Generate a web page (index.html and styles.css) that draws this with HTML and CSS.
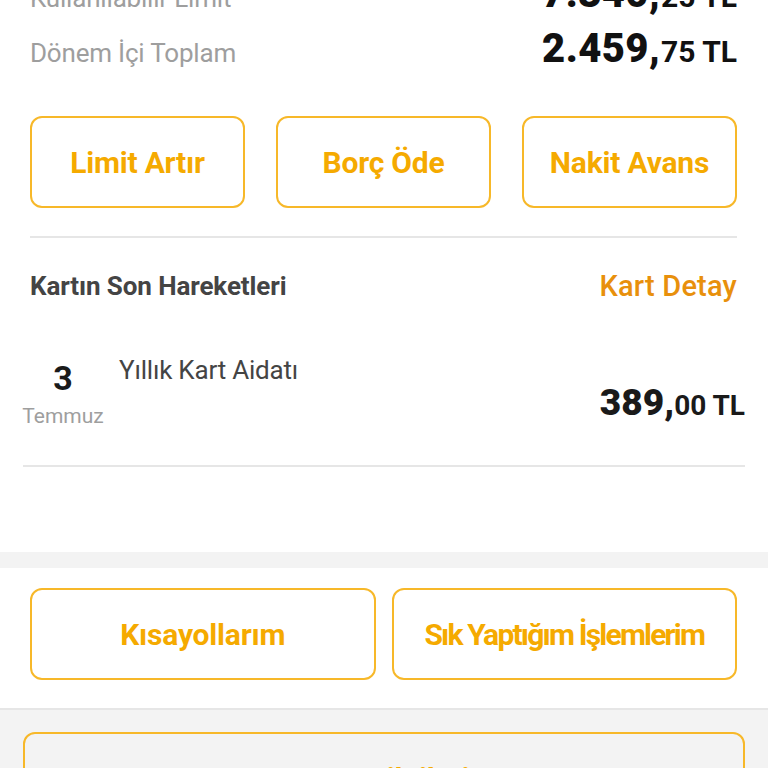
FILE: index.html
```html
<!DOCTYPE html>
<html lang="tr">
  <head>
    <meta charset="UTF-8" />
    <title>Kart Özeti</title>
    <link rel="stylesheet" href="styles.css">
  </head>
  <body>
    <section class="card-section">
      <div class="summary">
        <div class="summary-row">
          <span class="label">Kullanılabilir Limit</span>
          <span class="amount"><b>7.340,</b><small>25 TL</small></span>
        </div>
        <div class="summary-row">
          <span class="label">Dönem İçi Toplam</span>
          <span class="amount"><b>2.459,</b><small>75 TL</small></span>
        </div>
      </div>

      <div class="actions three">
        <button class="outline">Limit Artır</button>
        <button class="outline">Borç Öde</button>
        <button class="outline">Nakit Avans</button>
      </div>

      <div class="moves-head">
        <span class="title">Kartın Son Hareketleri</span>
        <a class="link">Kart Detay</a>
      </div>

      <div class="move">
        <div class="date">
          <span class="day">3</span>
          <span class="month">Temmuz</span>
        </div>
        <div class="desc">Yıllık Kart Aidatı</div>
        <div class="move-amount"><b>389,</b><small>00 TL</small></div>
      </div>
    </section>

    <section class="shortcuts">
      <div class="actions two">
        <button class="outline">Kısayollarım</button>
        <button class="outline tight">Sık Yaptığım İşlemlerim</button>
      </div>
    </section>

    <section class="more">
      <button class="outline wide">Borç Bilgileri</button>
    </section>
  </body>
</html>
```

FILE: styles.css
```css
body {
  margin: 0;
  font-family: Roboto, "Noto Sans", sans-serif;
  background: #f3f3f3;
  overflow: hidden;
}

.card-section {
  background: white;
  margin-top: -34px;
  padding: 0 31px 0 30px;
  height: 586px;
}

/* Summary */
.summary-row {
  display: flex;
  justify-content: space-between;
  align-items: baseline;
  height: 55px;
  line-height: 55px;
}
.label {
  color: #9e9e9e;
  font-size: 26px;
  letter-spacing: -0.2px;
}
.amount {
  color: #111;
  font-weight: bold;
}
.amount b {
  font-size: 40px;
  letter-spacing: 0.4px;
}
.amount small {
  font-size: 30px;
  margin-left: 1px;
}

/* Buttons */
.actions {
  display: grid;
  gap: 31px;
}
.actions.three {
  grid-template-columns: repeat(3, 1fr);
  margin-top: 40px;
  padding-bottom: 28px;
  border-bottom: 2px solid #e6e6e6;
}
.actions.two {
  grid-template-columns: 1fr 1fr;
  gap: 16px;
}
.outline {
  height: 92px;
  background: white;
  border: 2px solid #f7b829;
  border-radius: 12px;
  color: #f5aa00;
  font-family: Roboto, sans-serif;
  font-size: 30px;
  font-weight: bold;
  letter-spacing: -0.2px;
  padding: 0;
}
.outline.tight {
  letter-spacing: -1.8px;
}

/* Moves */
.moves-head {
  display: flex;
  justify-content: space-between;
  align-items: center;
  height: 96px;
}
.moves-head .title {
  color: #444;
  font-size: 26px;
  font-weight: bold;
  letter-spacing: -0.1px;
}
.moves-head .link {
  color: #e8900c;
  font-size: 29px;
  font-weight: 500;
  letter-spacing: 0.2px;
}

.move {
  display: flex;
  align-items: flex-start;
  margin: 0 -8px 0 -7px;
  height: 131px;
  border-bottom: 2px solid #e6e6e6;
}
.date {
  display: flex;
  flex-direction: column;
  align-items: center;
  width: 80px;
  padding-top: 24px;
}
.day {
  color: #1a1a1a;
  font-size: 34px;
  font-weight: bold;
  line-height: 40px;
}
.month {
  color: #9e9e9e;
  font-size: 21px;
  line-height: 36px;
}
.desc {
  flex: 1;
  color: #444;
  font-size: 26px;
  padding: 21px 0 0 16px;
  letter-spacing: -0.2px;
}
.move-amount {
  align-self: center;
  margin-top: 6px;
  color: #1a1a1a;
  font-weight: bold;
}
.move-amount b {
  font-size: 37px;
}
.move-amount small {
  font-size: 28px;
}

/* Shortcuts */
.shortcuts {
  background: white;
  margin-top: 16px;
  padding: 20px 31px 28px 30px;
  border-bottom: 2px solid #e6e6e6;
}

.more {
  padding: 22px 23px;
}
.outline.wide {
  width: 100%;
  background: #f3f3f3;
}
```
